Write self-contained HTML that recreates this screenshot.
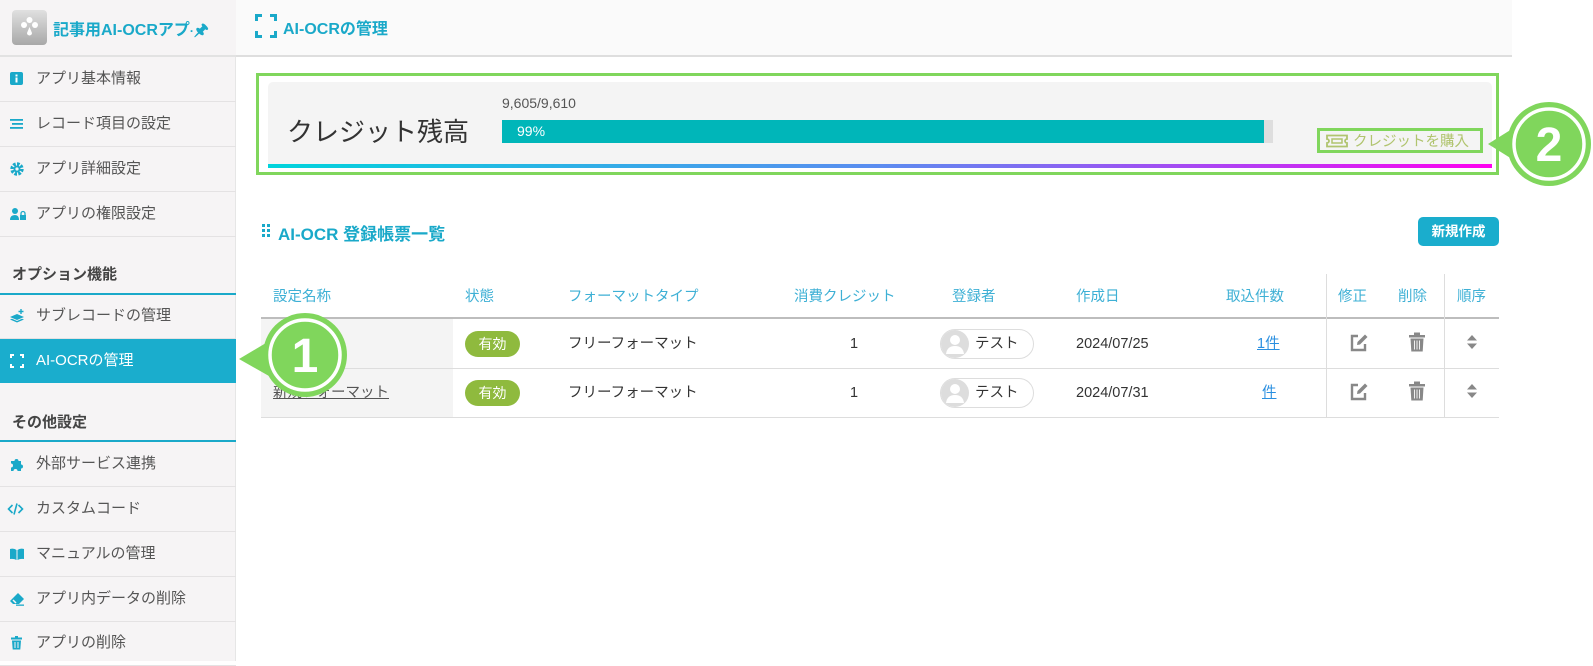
<!DOCTYPE html>
<html><head><meta charset="utf-8">
<style>
*{margin:0;padding:0;box-sizing:border-box}
body{width:1593px;height:661px;position:relative;overflow:hidden;background:#fff;font-family:"Liberation Sans","Noto Sans CJK JP",sans-serif;color:#333}
.a{position:absolute}
#side{left:0;top:0;width:236px;height:661px;background:#f6f4f5;border-right:1px solid #e6e6e6}
.it{position:absolute;left:0;width:236px;height:45px;border-bottom:1px solid #e4e2e3;font-size:15px;color:#555;line-height:44px;padding-left:36px}
.ic{position:absolute;left:10px;top:15px;width:14px;height:14px}
.sec{position:absolute;left:12px;font-size:15px;font-weight:bold;color:#444}
.th{position:absolute;top:285px;font-size:14.5px;color:#3eb0d5}
.td{position:absolute;font-size:14.5px;color:#333;line-height:20px;height:20px}
</style></head><body>
<div id="side" class="a">
  <div class="a" style="left:0;top:0;width:236px;height:57px;border-bottom:2px solid #e2e2e2;background:#f6f4f5"></div>
  <div class="a" style="left:12px;top:10px;width:35px;height:35px;border-radius:4px;background:linear-gradient(#e0e0e0,#a8a8a8)"><svg width="35" height="35"><circle cx="12" cy="15" r="3" fill="#fff"/><circle cx="23" cy="15" r="3" fill="#fff"/><circle cx="17.5" cy="10" r="3" fill="#fff"/><path d="M17.5 17 L20 23 A2.5 2.5 0 0 1 15 23 Z" fill="#fff"/></svg></div>
  <div class="a" style="left:53px;top:16px;font-size:16px;font-weight:bold;color:#1aa9c9;white-space:nowrap">記事用AI-OCRアプ<span style="font-size:12px">·</span>🖈</div>
  <div class="it" style="top:57px"><svg class="ic" viewBox="0 0 14 14"><rect width="13" height="13" rx="2" fill="#1aa9c9"/><rect x="5.5" y="5.5" width="2" height="5" fill="#fff"/><rect x="5.5" y="2.5" width="2" height="2" fill="#fff"/></svg>アプリ基本情報</div>
  <div class="it" style="top:102px"><svg class="ic" viewBox="0 0 14 14"><rect y="2" width="13" height="1.8" fill="#1aa9c9"/><rect x="2" y="6" width="11" height="1.8" fill="#1aa9c9"/><rect y="10" width="13" height="1.8" fill="#1aa9c9"/></svg>レコード項目の設定</div>
  <div class="it" style="top:147px"><svg class="ic" viewBox="0 0 14 14"><circle cx="7" cy="7" r="5" fill="none" stroke="#1aa9c9" stroke-width="3.4" stroke-dasharray="2.6 1.3"/><circle cx="7" cy="7" r="3.5" fill="#1aa9c9"/><circle cx="7" cy="7" r="1.6" fill="#f6f4f5"/></svg>アプリ詳細設定</div>
  <div class="it" style="top:192px"><svg class="ic" viewBox="0 0 16 14" style="width:16px"><circle cx="5" cy="4" r="3" fill="#1aa9c9"/><path d="M0 13 Q0 8 5 8 Q9 8 9 13Z" fill="#1aa9c9"/><rect x="10" y="8" width="6" height="5" fill="#1aa9c9"/><path d="M11 8 V6.5 A2 2 0 0 1 15 6.5 V8" stroke="#1aa9c9" fill="none" stroke-width="1.3"/></svg>アプリの権限設定</div>
  <div class="sec" style="top:263px">オプション機能</div>
  <div class="a" style="left:0;top:293px;width:236px;height:1.5px;background:#1aa9c9"></div>
  <div class="it" style="top:294px"><svg class="ic" viewBox="0 0 14 14"><path d="M0 8 L7 5 L14 8 L7 11Z" fill="#1aa9c9"/><path d="M0 10.5 L7 13.5 L14 10.5 L12 9.7 L7 12 L2 9.7Z" fill="#1aa9c9"/><path d="M11 0v5M8.5 2.5h5" stroke="#1aa9c9" stroke-width="1.4"/></svg>サブレコードの管理</div>
  <div class="it" style="top:339px;height:44px;background:#1aadcd;color:#fff;border:none"><svg class="ic" viewBox="0 0 14 14"><path d="M1 4V1H4M10 1H13V4M13 10V13H10M4 13H1V10" stroke="#fff" stroke-width="2" fill="none"/></svg>AI-OCRの管理</div>
  <div class="sec" style="top:411px">その他設定</div>
  <div class="a" style="left:0;top:440px;width:236px;height:1.5px;background:#1aa9c9"></div>
  <div class="it" style="top:442px"><svg class="ic" viewBox="0 0 14 14"><path d="M1 4h3.5a2 2 0 1 1 4 0H11v3.5a2 2 0 1 1 0 4V14H7.5a2 2 0 1 0-4 0H1V10.5a2 2 0 1 0 0-4Z" fill="#1aa9c9"/></svg>外部サービス連携</div>
  <div class="it" style="top:487px"><svg class="ic" viewBox="0 0 16 14" style="left:7px;width:17px"><path d="M5 3L1 7L5 11M11 3L15 7L11 11M9.5 1.5L6.5 12.5" stroke="#1aa9c9" stroke-width="1.6" fill="none"/></svg>カスタムコード</div>
  <div class="it" style="top:532px"><svg class="ic" viewBox="0 0 14 14"><path d="M0 2Q4 1 6.5 3V13Q4 11.5 0 12Z M14 2Q10 1 7.5 3V13Q10 11.5 14 12Z" fill="#1aa9c9"/></svg>マニュアルの管理</div>
  <div class="it" style="top:577px"><svg class="ic" viewBox="0 0 14 14"><path d="M8 1L14 7L9 12H3L0 9Z" fill="#1aa9c9"/><path d="M3 8L6 11" stroke="#f6f4f5" stroke-width="1.5"/><rect x="6" y="12.5" width="8" height="1.3" fill="#1aa9c9"/></svg>アプリ内データの削除</div>
  <div class="it" style="top:621px"><svg class="ic" viewBox="0 0 14 14"><rect x="1" y="1.5" width="11" height="2" fill="#1aa9c9"/><rect x="5" y="0" width="3" height="2" fill="#1aa9c9"/><path d="M2 4.5h9l-.7 9H2.7Z" fill="#1aa9c9"/><path d="M5 6v6M8 6v6" stroke="#f6f4f5" stroke-width="1"/></svg>アプリの削除</div>
</div>

<div class="a" style="left:236px;top:0;width:1276px;height:57px;background:#fafafa;border-bottom:2px solid #dedede"></div>
<svg class="a" style="left:255px;top:14px" width="22" height="24"><path d="M1.5 7V1.5H7M15 1.5H20.5V7M20.5 17V22.5H15M7 22.5H1.5V17" stroke="#1aa9c9" stroke-width="3" fill="none"/></svg>
<div class="a" style="left:283px;top:15px;font-size:16px;font-weight:bold;color:#1aa9c9">AI-OCRの管理</div>

<div class="a" style="left:256px;top:73px;width:1243px;height:102px;border:3px solid #80d65c"></div>
<div class="a" style="left:268px;top:82px;width:1224px;height:86px;background:#f4f4f4;border-radius:5px 5px 0 0"></div>
<div class="a" style="left:268px;top:164px;width:1224px;height:4px;background:linear-gradient(90deg,#00d4dc,#5b8cf0 50%,#b53cf3 80%,#ff00f0)"></div>
<div class="a" style="left:287px;top:112px;font-size:26px;color:#333">クレジット残高</div>
<div class="a" style="left:502px;top:95px;font-size:14px;color:#555">9,605/9,610</div>
<div class="a" style="left:502px;top:120px;width:771px;height:23px;background:#dedede"></div>
<div class="a" style="left:502px;top:120px;width:762px;height:23px;background:#00b6b9;color:#fff;font-size:14px;line-height:23px;padding-left:15px">99%</div>
<div class="a" style="left:1317px;top:128px;width:166px;height:25px;border:3px solid #80d65c"></div>
<svg class="a" style="left:1325px;top:134px" width="24" height="14"><path d="M2 1.5H22V5a2 2 0 0 0 0 4V12.5H2V9a2 2 0 0 0 0-4Z" fill="none" stroke="#b0c46e" stroke-width="1.8"/><rect x="7" y="5" width="10" height="4" fill="none" stroke="#b0c46e" stroke-width="1.5"/></svg>
<div class="a" style="left:1353px;top:130px;font-size:14.5px;color:#b0c46e">クレジットを購入</div>

<svg class="a" style="left:1480px;top:99px" width="113" height="92"><path d="M8 45 L40 25 L40 65Z" fill="#80d65c"/><circle cx="69" cy="45" r="42" fill="#80d65c"/><circle cx="69" cy="45" r="35" fill="none" stroke="#fff" stroke-width="3.5"/><text x="69" y="62" text-anchor="middle" font-family="Liberation Sans" font-weight="bold" font-size="48" fill="#fff">2</text></svg>

<svg class="a" style="left:262px;top:224px" width="9" height="14"><g fill="#1aa9c9"><rect x="0" y="0" width="3" height="3"/><rect x="5" y="0" width="3" height="3"/><rect x="0" y="5" width="3" height="3"/><rect x="5" y="5" width="3" height="3"/><rect x="0" y="10" width="3" height="3"/><rect x="5" y="10" width="3" height="3"/></g></svg>
<div class="a" style="left:278px;top:220px;font-size:17px;font-weight:bold;color:#1aa9c9">AI-OCR 登録帳票一覧</div>
<div class="a" style="left:1418px;top:217px;width:81px;height:29px;border-radius:5px;background:#1aadcd;color:#fff;font-size:13.5px;font-weight:bold;text-align:center;line-height:29px">新規作成</div>

<div class="a" style="left:261px;top:317px;width:1238px;height:2px;background:#bdbdbd"></div>
<div class="a" style="left:261px;top:319px;width:192px;height:98px;background:#f4f4f4"></div>
<div class="a" style="left:261px;top:368px;width:1238px;height:1px;background:#ddd"></div>
<div class="a" style="left:261px;top:417px;width:1238px;height:1px;background:#ddd"></div>
<div class="a" style="left:1326px;top:274px;width:1px;height:143px;background:#ddd"></div>
<div class="a" style="left:1444px;top:274px;width:1px;height:143px;background:#ddd"></div>

<div class="th" style="left:273px">設定名称</div>
<div class="th" style="left:465px">状態</div>
<div class="th" style="left:568px">フォーマットタイプ</div>
<div class="th" style="left:794px">消費クレジット</div>
<div class="th" style="left:952px">登録者</div>
<div class="th" style="left:1076px">作成日</div>
<div class="th" style="left:1226px">取込件数</div>
<div class="th" style="left:1338px">修正</div>
<div class="th" style="left:1398px">削除</div>
<div class="th" style="left:1457px">順序</div>

<div class="td" style="left:273px;top:334px;text-decoration:underline">帳票登録</div>
<div class="td" style="left:273px;top:383px;text-decoration:underline;color:#555">新規フォーマット</div>

<div class="a" style="left:465px;top:331px;width:55px;height:26px;border-radius:13px;background:#8fba3e;color:#fff;font-size:14px;text-align:center;line-height:26px">有効</div>
<div class="a" style="left:465px;top:380px;width:55px;height:26px;border-radius:13px;background:#8fba3e;color:#fff;font-size:14px;text-align:center;line-height:26px">有効</div>
<div class="td" style="left:568px;top:334px">フリーフォーマット</div>
<div class="td" style="left:568px;top:383px">フリーフォーマット</div>
<div class="td" style="left:850px;top:334px">1</div>
<div class="td" style="left:850px;top:383px">1</div>

<div class="a" style="left:940px;top:329px;width:94px;height:30px;border:1px solid #ddd;border-radius:15px;background:#fff"></div>
<div class="a" style="left:940px;top:378px;width:94px;height:30px;border:1px solid #ddd;border-radius:15px;background:#fff"></div>
<svg class="a" style="left:941px;top:330px" width="28" height="28"><circle cx="14" cy="14" r="14" fill="#ddd"/><circle cx="14" cy="10" r="5" fill="#fff"/><path d="M5 24 Q6 16 14 16 Q22 16 23 24Z" fill="#fff"/></svg>
<svg class="a" style="left:941px;top:379px" width="28" height="28"><circle cx="14" cy="14" r="14" fill="#ddd"/><circle cx="14" cy="10" r="5" fill="#fff"/><path d="M5 24 Q6 16 14 16 Q22 16 23 24Z" fill="#fff"/></svg>
<div class="td" style="left:975px;top:334px">テスト</div>
<div class="td" style="left:975px;top:383px">テスト</div>
<div class="td" style="left:1076px;top:334px">2024/07/25</div>
<div class="td" style="left:1076px;top:383px">2024/07/31</div>
<div class="td" style="left:1257px;top:334px;color:#2a8fe0;text-decoration:underline">1件</div>
<div class="td" style="left:1262px;top:383px;color:#2a8fe0;text-decoration:underline">件</div>

<svg class="a" style="left:1349px;top:333px" width="20" height="20"><path d="M9 3H3V17H16V11" fill="none" stroke="#888" stroke-width="2.4"/><path d="M8 12L8.5 9L16 1.5L18.5 4L11 11.5Z" fill="#888"/></svg>
<svg class="a" style="left:1349px;top:382px" width="20" height="20"><path d="M9 3H3V17H16V11" fill="none" stroke="#888" stroke-width="2.4"/><path d="M8 12L8.5 9L16 1.5L18.5 4L11 11.5Z" fill="#888"/></svg>
<svg class="a" style="left:1409px;top:332px" width="16" height="20"><rect x="0" y="3" width="16" height="2.5" fill="#888"/><rect x="5" y="0.5" width="6" height="3" fill="#888"/><path d="M1.5 6.5h13l-.8 13H2.3Z" fill="#888"/><path d="M5.5 8.5v9M8 8.5v9M10.5 8.5v9" stroke="#f0f0f0" stroke-width="1"/></svg>
<svg class="a" style="left:1409px;top:381px" width="16" height="20"><rect x="0" y="3" width="16" height="2.5" fill="#888"/><rect x="5" y="0.5" width="6" height="3" fill="#888"/><path d="M1.5 6.5h13l-.8 13H2.3Z" fill="#888"/><path d="M5.5 8.5v9M8 8.5v9M10.5 8.5v9" stroke="#f0f0f0" stroke-width="1"/></svg>
<svg class="a" style="left:1466px;top:334px" width="12" height="16"><path d="M1 6.5L6 1L11 6.5Z M1 9.5L6 15L11 9.5Z" fill="#888"/></svg>
<svg class="a" style="left:1466px;top:383px" width="12" height="16"><path d="M1 6.5L6 1L11 6.5Z M1 9.5L6 15L11 9.5Z" fill="#888"/></svg>

<svg class="a" style="left:236px;top:310px" width="116" height="92"><path d="M3 49 L40 27 L40 70Z" fill="#80d65c"/><circle cx="69" cy="45" r="42" fill="#80d65c"/><circle cx="69" cy="45" r="35" fill="none" stroke="#fff" stroke-width="3.5"/><text x="69" y="62" text-anchor="middle" font-family="Liberation Sans" font-weight="bold" font-size="48" fill="#fff">1</text></svg>
</body></html>
